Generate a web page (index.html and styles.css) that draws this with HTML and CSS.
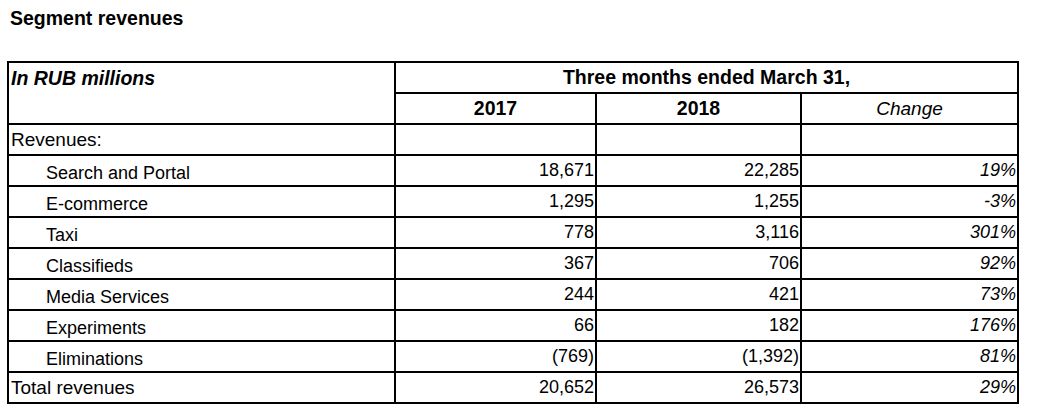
FILE: index.html
```html
<!DOCTYPE html>
<html>
<head>
<meta charset="utf-8">
<title>Segment revenues</title>
<link rel="stylesheet" href="styles.css">
</head>
<body>
<h1 class="title">Segment revenues</h1>
<table class="fin-table">
  <colgroup>
    <col class="c-label">
    <col class="c-y1">
    <col class="c-y2">
    <col class="c-chg">
  </colgroup>
  <tr>
    <th class="unit" rowspan="2">In RUB millions</th>
    <th class="period" colspan="3">Three months ended March 31,</th>
  </tr>
  <tr>
    <th class="year">2017</th>
    <th class="year">2018</th>
    <td class="chg-head">Change</td>
  </tr>
  <tr>
    <td class="lbl">Revenues:</td>
    <td></td><td></td><td></td>
  </tr>
  <tr><td class="sub">Search and Portal</td><td class="num">18,671</td><td class="num">22,285</td><td class="pct">19%</td></tr>
  <tr><td class="sub">E-commerce</td><td class="num">1,295</td><td class="num">1,255</td><td class="pct">-3%</td></tr>
  <tr><td class="sub">Taxi</td><td class="num">778</td><td class="num">3,116</td><td class="pct">301%</td></tr>
  <tr><td class="sub">Classifieds</td><td class="num">367</td><td class="num">706</td><td class="pct">92%</td></tr>
  <tr><td class="sub">Media Services</td><td class="num">244</td><td class="num">421</td><td class="pct">73%</td></tr>
  <tr><td class="sub">Experiments</td><td class="num">66</td><td class="num">182</td><td class="pct">176%</td></tr>
  <tr><td class="sub">Eliminations</td><td class="num">(769)</td><td class="num">(1,392)</td><td class="pct">81%</td></tr>
  <tr><td class="lbl">Total revenues</td><td class="num">20,652</td><td class="num">26,573</td><td class="pct">29%</td></tr>
</table>
</body>
</html>
```
FILE: styles.css
```css
html, body {
  background: #fff;
}
body {
  margin: 0;
  padding: 7px 8px 0 7px;
  font-family: "Liberation Sans", Arial, sans-serif;
  color: #000;
}
.title {
  margin: 0 0 32px 3px;
  font-size: 19.5px;
  line-height: 22px;
  font-weight: bold;
}
.fin-table {
  border-collapse: collapse;
  table-layout: fixed;
  width: 1010px;
}
.c-label { width: 387px; }
.c-y1 { width: 201px; }
.c-y2 { width: 205px; }
.c-chg { width: 217px; }
.fin-table th,
.fin-table td {
  border: 2px solid #000;
  height: 31px;
  padding: 0 1px;
  box-sizing: border-box;
  vertical-align: middle;
  white-space: nowrap;
}
.fin-table th {
  font-size: 19.5px;
  font-weight: bold;
  text-align: center;
}
.fin-table th.unit {
  text-align: left;
  vertical-align: top;
  font-style: italic;
  padding: 4px 2px 0;
}
.fin-table .chg-head {
  font-size: 19px;
  font-style: italic;
  text-align: center;
}
.fin-table .lbl {
  font-size: 19px;
  padding-left: 2px;
}
.fin-table .sub {
  font-size: 18px;
  padding: 5px 0 0 37px;
}
.fin-table .num {
  font-size: 18px;
  text-align: right;
}
.fin-table .pct {
  font-size: 18px;
  font-style: italic;
  text-align: right;
}
```
